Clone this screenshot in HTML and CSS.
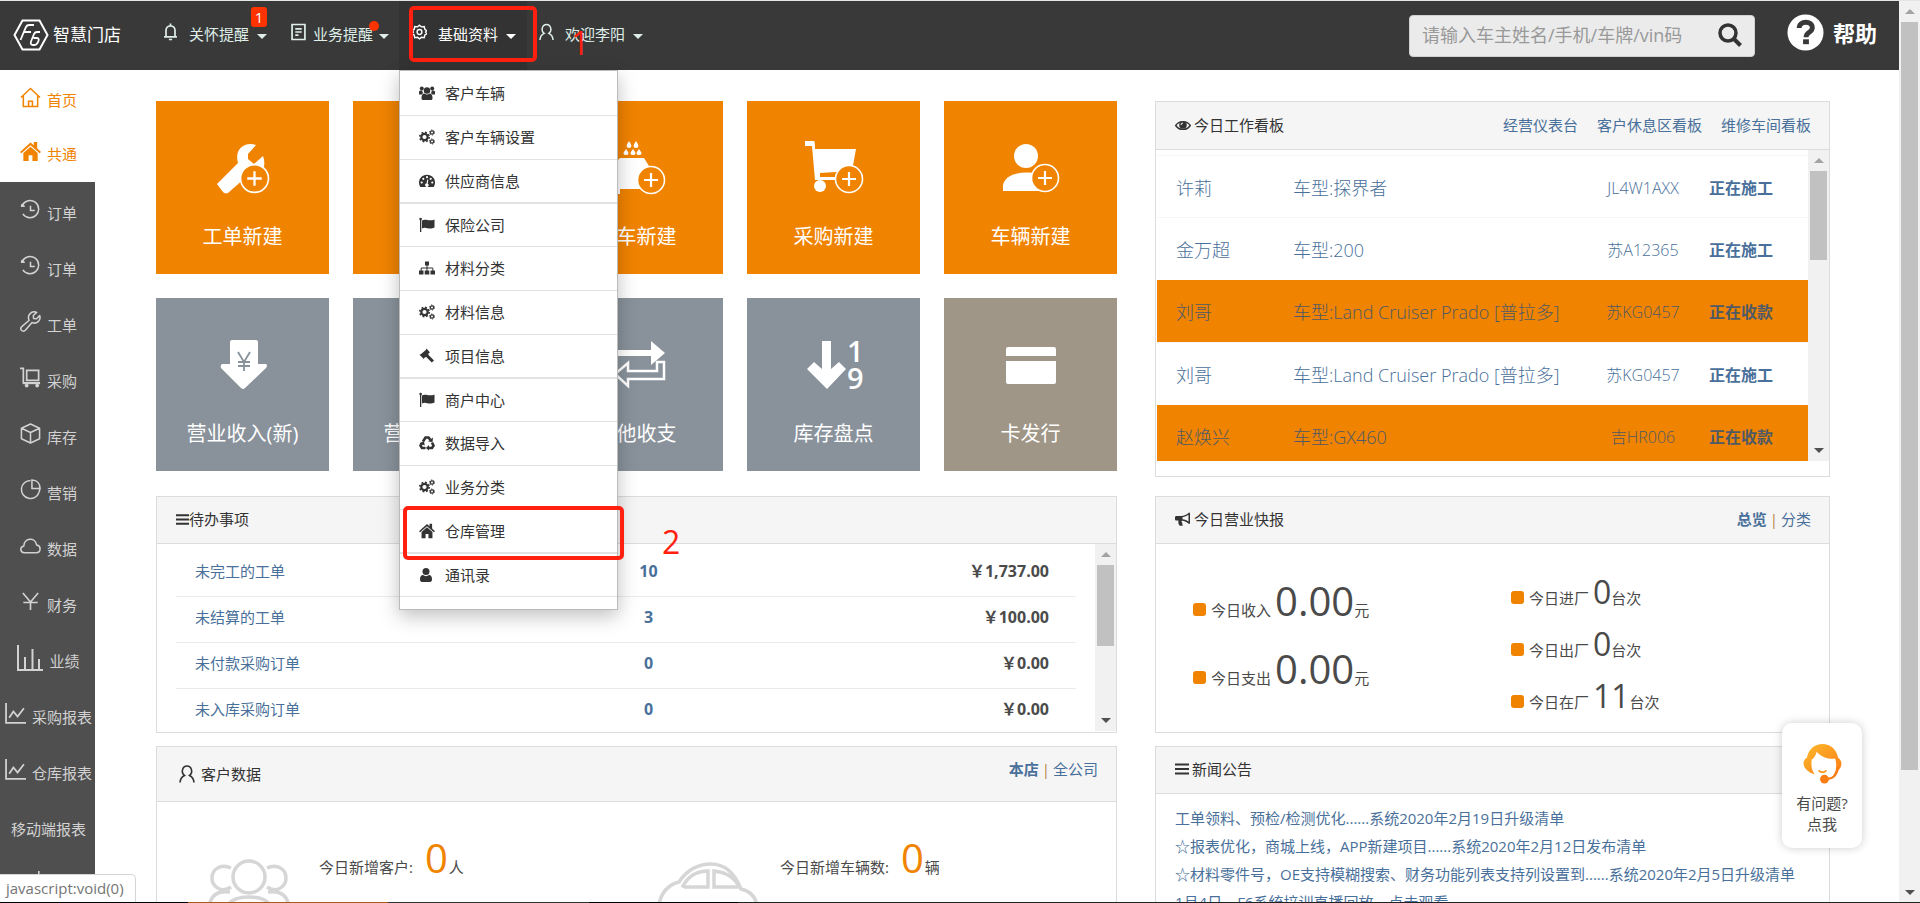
FILE: index.html
```
<!DOCTYPE html>
<html lang="zh-CN">
<head>
<meta charset="utf-8">
<title>智慧门店</title>
<link rel="stylesheet" href="styles.css">
</head>
<body>
<svg class="sprite" aria-hidden="true">
  <symbol id="history" viewBox="0 0 22 22"><path d="M2.5 6.500A9 9 0 1 1 3 15.500M1 7.500h4M11 7v5h4.500" fill="none" stroke="currentColor" stroke-width="1.600"/><circle cx="2.500" cy="6.500" r="1.500" fill="currentColor"/></symbol>
  <symbol id="wrench" viewBox="0 0 22 22"><path d="M20.600 4.800a5.800 5.800 0 0 1-8 7.200l-7 8.200a2.500 2.500 0 0 1-4-3.500l8-7A6 6 0 0 1 17.500 1.500l-3.600 3.200.3 3.200 3.200.2z" fill="none" stroke="currentColor" stroke-width="1.600" stroke-linejoin="round"/></symbol>
  <symbol id="trolley" viewBox="0 0 22 22"><path d="M0 1.500h3.500v15H21M7 3.500h12.500V14H7z" fill="none" stroke="currentColor" stroke-width="1.800"/><path d="M3 16.500h18v1.500H3z" fill="currentColor"/><circle cx="7" cy="19.500" r="2" fill="currentColor"/><circle cx="18" cy="19.500" r="2" fill="currentColor"/></symbol>
  <symbol id="box" viewBox="0 0 22 22"><path d="M11 1l9.500 4.500v11L11 21l-9.500-4.500v-11zM1.500 5.500L11 10l9.500-4.500M11 10v11" fill="none" stroke="currentColor" stroke-width="1.600" stroke-linejoin="round"/></symbol>
  <symbol id="pie" viewBox="0 0 22 22"><path d="M11 1.500A9.500 9.500 0 1 0 20 14M12.500 1v9H21C21 5 18 1 12.500 1z" fill="none" stroke="currentColor" stroke-width="1.600"/><path d="M20 14q1-3 .5-5" fill="none" stroke="currentColor" stroke-width="1.600"/></symbol>
  <symbol id="cloud" viewBox="0 0 22 22"><path d="M4.500 18.500C0 18.500-.5 12.500 4 11.500 4.500 2.500 16 2 17.500 10.500c5 1 4.500 8-.5 8z" fill="none" stroke="currentColor" stroke-width="1.600"/></symbol>
  <symbol id="yen" viewBox="0 0 22 22"><path d="M3 2l8 9.500L19 2M11 11.500V20M3.500 12h15" fill="none" stroke="currentColor" stroke-width="1.700"/></symbol>
  <symbol id="bars" viewBox="0 0 26 26"><path d="M1 0v25h25M8 12v12M15.500 4v20M22 14v10" fill="none" stroke="currentColor" stroke-width="2"/></symbol>
  <symbol id="trend" viewBox="0 0 20 20"><path d="M1 0v19h19M4 14l4-6 4 5 6-8" fill="none" stroke="currentColor" stroke-width="1.700"/></symbol>
  <symbol id="house-line" viewBox="0 0 22 22"><path d="M1 11L11 1.500 21 11M3.500 9.500v11h15v-11M9 20v-5h4v5" fill="none" stroke="currentColor" stroke-width="1.600"/></symbol>
  <symbol id="house" viewBox="0 0 22 22"><path d="M0 11.500L11 1.500l3.500 3V1H18v6.500l4 4-1.500 1.300L11 4.500 1.500 12.800zM3.500 12.500L11 6l7.500 6.500V21H13v-6H9v6H3.500z" fill="currentColor"/></symbol>
  <symbol id="bell" viewBox="0 0 14 16"><path d="M1 12.500h12M2.800 12.500V6.500a4.200 4.200 0 0 1 8.400 0v6M5.500 15h3M7 0v2" fill="none" stroke="currentColor" stroke-width="1.600"/></symbol>
  <symbol id="doc" viewBox="0 0 14 16"><path d="M1 1h12v14H1zM4 5h6M4 8h6M4 11h3" fill="none" stroke="currentColor" stroke-width="1.600"/></symbol>
  <symbol id="gear" viewBox="0 0 16 16"><path d="M8 .8l2 1.700 3-.3.700 2.900 2 1.400L14.500 8l1.200 2-2 1.200-.7 2.800-3-.3-2 1.700-2-1.700-3 .3-.7-2.800-2-1.200L1.500 8 .3 6.500l2-1.400.7-2.900 3 .3z" fill="none" stroke="currentColor" stroke-width="1.500"/><circle cx="8" cy="8" r="2.600" fill="none" stroke="currentColor" stroke-width="1.500"/></symbol>
  <symbol id="person" viewBox="0 0 16 18"><path d="M1 17.500c.3-4 2.500-6 4.500-7C1.500 7.500 3.500 1 8 1s6.500 6.500 2.500 9.500c2 1 4.200 3 4.500 7" fill="none" stroke="currentColor" stroke-width="1.600"/></symbol>
  <symbol id="users" viewBox="0 0 16 16"><circle cx="2.800" cy="3.500" r="2" fill="currentColor"/><circle cx="13.200" cy="3.500" r="2" fill="currentColor"/><path d="M0 9.500V7c0-1.500 1-1.500 3-1.500L4 8 3 9.500zM16 9.500V7c0-1.500-1-1.500-3-1.500L12 8l1 1.500z" fill="currentColor"/><circle cx="8" cy="5.500" r="3.200" fill="currentColor"/><path d="M2.500 13c0-3 1-4.500 3-4.500 1.500 1.300 3.500 1.300 5 0 2 0 3 1.500 3 4.500 0 1.500-.5 2-2 2h-7c-1.500 0-2-.5-2-2z" fill="currentColor"/></symbol>
  <symbol id="cogs" viewBox="0 0 16 16"><g fill="none" stroke="currentColor"><circle cx="5.500" cy="8" r="3.200" stroke-width="2.200"/><circle cx="5.500" cy="8" r="4.700" stroke-width="1.600" stroke-dasharray="1.850 1.840"/><circle cx="13" cy="3.500" r="1.600" stroke-width="1.200"/><circle cx="13" cy="3.500" r="2.500" stroke-width="1" stroke-dasharray="1.300 1.320"/><circle cx="13" cy="12.500" r="1.600" stroke-width="1.200"/><circle cx="13" cy="12.500" r="2.500" stroke-width="1" stroke-dasharray="1.300 1.320"/></g></symbol>
  <symbol id="gauge" viewBox="0 0 16 16"><path d="M1.300 14A8 8 0 1 1 14.700 14z" fill="currentColor"/><g fill="#fff"><circle cx="2.700" cy="9.500" r="1.100"/><circle cx="4.300" cy="5.800" r="1.100"/><circle cx="8" cy="4.200" r="1.100"/><circle cx="11.700" cy="5.800" r="1.100"/><circle cx="13.300" cy="9.500" r="1.100"/><path d="M8.300 6.500l1 .2-.6 4a1.700 1.700 0 1 1-1.200-.2z"/></g></symbol>
  <symbol id="flag" viewBox="0 0 16 16"><path d="M1 2h1.300v13H1zM3 3.500c4-2.500 6 1.500 12.500-1v8c-6 3-8.500-1.500-12.500 1z" fill="currentColor"/><circle cx="1.600" cy="2" r="1.300" fill="currentColor"/></symbol>
  <symbol id="sitemap" viewBox="0 0 16 16"><path d="M6 1.500h4v4H6zM0 10.500h4.500v4H0zM5.700 10.500h4.600v4H5.700zM11.500 10.500H16v4h-4.500z" fill="currentColor"/><path d="M2.200 11V8h11.600v3M8 5v6" fill="none" stroke="currentColor"/></symbol>
  <symbol id="gavel" viewBox="0 0 16 16"><path d="M7.500.5l3.500 4-1.200.6-.5 1.700 5.700 5.600-2.200 2.200-5.600-5.700-1.600.5-.7 1.700-4.400-4.400 1.600-.7L6.800 2z" fill="currentColor"/></symbol>
  <symbol id="recycle" viewBox="0 0 16 16"><g fill="none" stroke="currentColor" stroke-width="2.600"><path d="M4 6.500L6.500 2.500h3L11.500 5"/><path d="M13 7.500l1.500 3.200-1.500 2.300h-4"/><path d="M6.500 13H3l-1.500-2.300L3 8"/></g><path d="M9 6.500l4.500.5.500-4.500zM10 10v5.500L6.800 13zM.5 8.500L4.800 6l1 4.500z" fill="currentColor"/></symbol>
  <symbol id="user" viewBox="0 0 16 16"><circle cx="7" cy="4.500" r="3.500" fill="currentColor"/><path d="M1 12.500c0-3 1-4.500 3-4.500 1.800 1.500 4.200 1.500 6 0 2 0 3 1.500 3 4.500 0 1.500-.8 2.500-2 2.500H3c-1.200 0-2-1-2-2.500z" fill="currentColor"/></symbol>
  <symbol id="eye" viewBox="0 0 16 16"><path d="M.7 8.500C4 3.300 12 3.300 15.300 8.500 12 13.700 4 13.700.7 8.500z" fill="none" stroke="currentColor" stroke-width="1.400"/><circle cx="8" cy="8" r="3.800" fill="currentColor"/><path d="M6 8a2 2 0 0 1 2-2" fill="none" stroke="#fff"/></symbol>
  <symbol id="horn" viewBox="0 0 16 16"><path d="M0 6.500C0 5.500.5 5 1.500 5H6c3 0 6-1.500 8-3.500.5 0 1 .5 1 1V12c0 .5-.5 1-1 1-2-2-4.500-3-7-3.300-.8.500-.5 1.500.5 2.500-.7.8-.2 1.500.5 2-1 1-3 .8-4-.2-.5-1.500-1-3-.5-4.500h-2C.5 9.500 0 9 0 8z" fill="currentColor"/><path d="M7.500 6.200c2.300-.2 4.500-1.200 6-2.400v6.700c-1.500-1.100-3.700-2-6-2.200z" fill="#f5f5f5"/></symbol>
  <symbol id="lines" viewBox="0 0 14 14"><path d="M0 2.500h14M0 7h14M0 11.500h14" stroke="currentColor" stroke-width="2.200"/></symbol>
  <symbol id="plus" viewBox="0 0 30 30"><circle cx="15" cy="15" r="13.500" fill="#f08300" stroke="#fff" stroke-width="1.600"/><path d="M15 8v14M8 15h14" stroke="#fff" stroke-width="2.200"/></symbol>
</svg>

<div class="window">
  <div class="page">
    <header class="topbar">
      <a class="brand" href="#">
        <svg class="brand-mark" viewBox="0 0 36 32"><path d="M9.500 1.500h17L34.500 16l-8 14.500h-17L1.500 16z" fill="none" stroke="#fff" stroke-width="2"/><path d="M21 6h-5q-2 0-3 2L7.500 21M11 13h7M27 13h-3q-2 0-3 2l-3 7.500q-1 3.500 2 3.500h1.500q2 0 3-2l1-2q1-3-2-3h-3" fill="none" stroke="#fff" stroke-width="1.800"/></svg>
        <span>智慧门店</span>
      </a>
      <nav class="topnav">
        <button class="topnav-item" type="button"><svg class="nav-icon"><use href="#bell"/></svg><span>关怀提醒</span><i class="caret"></i><b class="badge">1</b></button>
        <button class="topnav-item tight" type="button"><svg class="nav-icon"><use href="#doc"/></svg><span>业务提醒</span><i class="caret"></i><b class="dot"></b></button>
        <div class="dropdown">
          <button class="topnav-item active" type="button"><svg class="nav-icon"><use href="#gear"/></svg><span>基础资料</span><i class="caret"></i></button>
          <div class="mark mark-one"></div>
          <ul class="menu">
            <li><a href="#"><svg><use href="#users"/></svg>客户车辆</a></li>
            <li><a href="#"><svg><use href="#cogs"/></svg>客户车辆设置</a></li>
            <li class="group-end"><a href="#"><svg><use href="#gauge"/></svg>供应商信息</a></li>
            <li><a href="#"><svg><use href="#flag"/></svg>保险公司</a></li>
            <li><a href="#"><svg><use href="#sitemap"/></svg>材料分类</a></li>
            <li><a href="#"><svg><use href="#cogs"/></svg>材料信息</a></li>
            <li class="group-end"><a href="#"><svg><use href="#gavel"/></svg>项目信息</a></li>
            <li><a href="#"><svg><use href="#flag"/></svg>商户中心</a></li>
            <li><a href="#"><svg><use href="#recycle"/></svg>数据导入</a></li>
            <li><a href="#"><svg><use href="#cogs"/></svg>业务分类</a></li>
            <li class="group-end"><a href="#"><svg><use href="#house"/></svg>仓库管理</a><div class="mark mark-two"></div><span class="step step-two">2</span></li>
            <li><a href="#"><svg><use href="#user"/></svg>通讯录</a></li>
          </ul>
        </div>
        <button class="topnav-item" type="button"><svg class="nav-icon"><use href="#person"/></svg><span>欢迎李阳</span><i class="caret"></i><em class="step step-one">1</em></button>
      </nav>
      <form class="search">
        <input type="text" aria-label="搜索" placeholder="请输入车主姓名/手机/车牌/vin码">
        <button type="button" aria-label="查询"><svg viewBox="0 0 24 24"><circle cx="10" cy="10" r="8" fill="none" stroke="#333" stroke-width="3.500"/><path d="M15.500 15.500l7 7" stroke="#333" stroke-width="4"/></svg></button>
      </form>
      <a class="help" href="#"><svg viewBox="0 0 38 38"><circle cx="19" cy="19" r="18.500" fill="#fff"/><path d="M12.500 14.500c0-8 13.500-8 13.500-.5 0 5-6.500 4.500-6.500 10" fill="none" stroke="#393939" stroke-width="5"/><path d="M16.500 26h6v5h-6z" fill="#393939"/></svg>帮助</a>
    </header>

    <div class="body">
      <nav class="sidebar">
        <div class="side-top">
          <a href="#"><svg><use href="#house-line"/></svg>首页</a>
          <a href="#"><svg><use href="#house"/></svg>共通</a>
        </div>
        <div class="side-list">
          <a href="#"><svg><use href="#history"/></svg>订单</a>
          <a href="#"><svg><use href="#history"/></svg>订单</a>
          <a href="#"><svg><use href="#wrench"/></svg>工单</a>
          <a href="#"><svg><use href="#trolley"/></svg>采购</a>
          <a href="#"><svg><use href="#box"/></svg>库存</a>
          <a href="#"><svg><use href="#pie"/></svg>营销</a>
          <a href="#"><svg><use href="#cloud"/></svg>数据</a>
          <a href="#"><svg><use href="#yen"/></svg>财务</a>
          <a href="#"><svg class="large"><use href="#bars"/></svg>业绩</a>
          <a href="#"><svg><use href="#trend"/></svg>采购报表</a>
          <a href="#"><svg><use href="#trend"/></svg>仓库报表</a>
          <a href="#">移动端报表</a>
          <a href="#" aria-label="更多"><svg><use href="#bars"/></svg></a>
        </div>
      </nav>

      <main class="board">
        <div class="column">
          <section class="tiles">
            <a class="tile" href="#"><svg viewBox="0 0 60 60"><path d="M4 46L25 25C21 12 31 3 43 7L35 16v5l6 5 9-8c3 8 1 16-6 20l-12 2-17 15c-2 1-4 0-5-1z" fill="#fff"/><use href="#plus" x="26" y="25" width="31" height="31"/></svg>工单新建</a>
            <a class="tile" href="#"><svg viewBox="0 0 60 60"><path d="M10 8h30v44H10z" fill="#fff"/><use href="#plus" x="29" y="27" width="30" height="30"/></svg>预约新建</a>
            <a class="tile" href="#"><svg viewBox="0 0 60 60"><path d="M22 3q5 7 0 7t0-7zM29 3q5 7 0 7t0-7zM19 11q5 6 0 6t0-6zM26 11q5 6 0 6t0-6zM32 11q5 6 0 6t0-6zM4 29l9-9h24l5 8 6 1v22H13v5H5V32z" fill="#fff"/><use href="#plus" x="29" y="27" width="30" height="30"/></svg>洗车新建</a>
            <a class="tile" href="#"><svg viewBox="0 0 60 60"><path d="M1 3h9q1 0 1 8h41l-4 22-32 2v4h30v3H11L8 8H1z" fill="#fff"/><circle cx="16" cy="48" r="6" fill="#fff"/><use href="#plus" x="30" y="26" width="30" height="30"/></svg>采购新建</a>
            <a class="tile" href="#"><svg viewBox="0 0 60 60"><circle cx="25" cy="18" r="12" fill="#fff"/><path d="M2 53V47C4 37 18 33 32 35L47 53z" fill="#fff"/><use href="#plus" x="29" y="25" width="30" height="30"/></svg>车辆新建</a>
            <a class="tile slate" href="#"><svg viewBox="0 0 60 60"><path d="M19 5h24q2 0 2 2v22h8q2 1 0 4L32 53q-2 2-4 0L8 33q-1-3 1-4h8V7q0-2 2-2z" fill="#fff"/><path d="M25 17l6 10 6-10M31 27v9M25 27h12M25 31h12" fill="none" stroke="#89929b" stroke-width="1.800"/></svg>营业收入(新)</a>
            <a class="tile slate" href="#"><svg viewBox="0 0 60 60"><path d="M17 53V30H8L30 5l22 25h-9v23z" fill="#fff"/></svg>营业支出(新)</a>
            <a class="tile slate" href="#"><svg viewBox="0 0 60 60"><path d="M2 15h42V6l14 12-14 12v-9H8v14H2z" fill="#fff"/><path d="M50 27h7v17H21v7L8 39l13-11v8h29z" fill="none" stroke="#fff" stroke-width="2.500"/></svg>其他收支</a>
            <a class="tile slate" href="#"><svg viewBox="0 0 60 60"><path d="M18 6h9v28l8-7 7 7-19 20L3 34l7-7 8 7z" fill="#fff"/><text class="sort-digit" x="43" y="27">1</text><text class="sort-digit" x="43" y="54">9</text></svg>库存盘点</a>
            <a class="tile sand" href="#"><svg viewBox="0 0 60 60"><path d="M7 12h46q2 0 2 2v7H5v-7q0-2 2-2zM5 26h50v21q0 2-2 2H7q-2 0-2-2z" fill="#fff"/></svg>卡发行</a>
          </section>

          <section class="panel todo">
            <h2 class="panel-head"><svg class="flush"><use href="#lines"/></svg>待办事项</h2>
            <div class="scroll-area">
              <div class="todo-list">
                <table class="todo-table">
                  <tr><td><a href="#">未完工的工单</a></td><td class="count">10</td><td class="money">￥1,737.00</td></tr>
                  <tr><td><a href="#">未结算的工单</a></td><td class="count">3</td><td class="money">￥100.00</td></tr>
                  <tr><td><a href="#">未付款采购订单</a></td><td class="count">0</td><td class="money">￥0.00</td></tr>
                  <tr><td><a href="#">未入库采购订单</a></td><td class="count">0</td><td class="money">￥0.00</td></tr>
                </table>
              </div>
              <div class="scrollbar"><i class="up"></i><i class="thumb thumb-todo"></i><i class="down"></i></div>
            </div>
          </section>

          <section class="panel customers">
            <div class="panel-head tall"><h2><svg class="person"><use href="#person"/></svg>客户数据</h2><div class="switch"><a class="on" href="#">本店</a><i>|</i><a href="#">全公司</a></div></div>
            <div class="customer-stats">
              <div class="customer-stat">
                <svg viewBox="0 0 80 70"><g fill="none" stroke="#d6d6d6" stroke-width="3.500"><circle cx="40" cy="18" r="16"/><path d="M22 9C11 4 3 11 3 19s9 16 19 9M58 9c11-5 19 2 19 10s-9 16-19 9M1 60V44q3-13 20-11M79 60V44q-3-13-20-11M18 60V50q2-12 22-12t22 12v10"/></g></svg>
                <span>今日新增客户:</span><strong>0</strong><span>人</span>
              </div>
              <div class="customer-stat car">
                <svg viewBox="0 0 102 70"><g fill="none" stroke="#d6d6d6" stroke-width="3.500"><path d="M2 60V42q4-18 20-22Q34 2 54 2t30 25q16 4 16 20v13M26 24Q34 9 51 9v16H28zM57 9q19 2 25 16H57z"/></g></svg>
                <span>今日新增车辆数:</span><strong>0</strong><span>辆</span>
              </div>
            </div>
          </section>
        </div>

        <div class="column">
          <section class="panel work">
            <div class="panel-head"><h2><svg><use href="#eye"/></svg>今日工作看板</h2><div class="head-links"><a href="#">经营仪表台</a><a href="#">客户休息区看板</a><a href="#">维修车间看板</a></div></div>
            <div class="scroll-area">
              <div class="work-list">
                <a href="#"><span>许莉</span><span>车型:探界者</span><span class="plate">JL4W1AXX</span><b>正在施工</b></a>
                <a href="#"><span>金万超</span><span>车型:200</span><span class="plate">苏A12365</span><b>正在施工</b></a>
                <a class="paying" href="#"><span>刘哥</span><span>车型:Land Cruiser Prado [普拉多]</span><span class="plate">苏KG0457</span><b>正在收款</b></a>
                <a href="#"><span>刘哥</span><span>车型:Land Cruiser Prado [普拉多]</span><span class="plate">苏KG0457</span><b>正在施工</b></a>
                <a class="paying" href="#"><span>赵焕兴</span><span>车型:GX460</span><span class="plate">吉HR006</span><b>正在收款</b></a>
              </div>
              <div class="scrollbar"><i class="up"></i><i class="thumb thumb-work"></i><i class="down"></i></div>
            </div>
          </section>

          <section class="panel report">
            <div class="panel-head"><h2><svg><use href="#horn"/></svg>今日营业快报</h2><div class="switch"><a class="on" href="#">总览</a><i>|</i><a href="#">分类</a></div></div>
            <div class="figures">
              <div class="figures-money">
                <p><i></i>今日收入 <strong>0.00</strong>元</p>
                <p><i></i>今日支出 <strong>0.00</strong>元</p>
              </div>
              <div class="figures-cars">
                <p><i></i>今日进厂 <strong>0</strong>台次</p>
                <p><i></i>今日出厂 <strong>0</strong>台次</p>
                <p><i></i>今日在厂 <strong>11</strong>台次</p>
              </div>
            </div>
          </section>

          <section class="panel news">
            <h2 class="panel-head"><svg class="list"><use href="#lines"/></svg>新闻公告</h2>
            <ul>
              <li><a href="#">工单领料、预检/检测优化......系统2020年2月19日升级清单</a></li>
              <li><a href="#">☆报表优化，商城上线，APP新建项目......系统2020年2月12日发布清单</a></li>
              <li><a href="#">☆材料零件号，OE支持模糊搜索、财务功能列表支持列设置到......系统2020年2月5日升级清单</a></li>
              <li><a href="#">1月4日，F6系统培训直播回放，点击观看</a></li>
            </ul>
          </section>
        </div>
      </main>
    </div>
  </div>
  <div class="scrollbar page-scroll"><i class="up"></i><i class="thumb thumb-page"></i><i class="down"></i></div>

  <a class="service" href="#">
    <svg viewBox="0 0 42 42"><defs><linearGradient id="amber" x1="0" y1="0" x2="1" y2="1"><stop offset="0" stop-color="#fdb92c"/><stop offset="1" stop-color="#fb7d14"/></linearGradient></defs><path d="M5 15C7 6 13 1 21 1s14 5 16 14c4 2 5 9 0 13-1 3-3 5-5 5 3-4 4-10 2-17-5 1-14-1-19-7-1 4-3 7-5 8-1 6 0 11 3 15C2 29-2 19 5 15z" fill="url(#amber)"/><path d="M37 24q-1 13-13 13" fill="none" stroke="#fb7d14" stroke-width="2"/><circle cx="23" cy="37" r="4.500" fill="#fb7d14"/><path d="M17 28q4 4 8 0" fill="none" stroke="#fb9a24" stroke-width="1.800"/></svg>
    <span>有问题?<br>点我</span>
  </a>
  <div class="status">javascript:void(0)</div>
  <div class="edge"></div>
</div>
</body>
</html>
```
FILE: styles.css
```
* { box-sizing: border-box; }
body {
  margin: 0;
  color: #4a4a4a;
  background: #fff;
  font: 15px/20px "Open Sans", "Noto Sans CJK SC", sans-serif;
}
a { color: #49709a; text-decoration: none; }
button, input { font: inherit; }
h2, p, ul { margin: 0; padding: 0; font-size: 15px; font-weight: 400; list-style: none; }
svg { flex: none; overflow: visible; }
.sprite { position: absolute; width: 0; height: 0; }

.window {
  position: relative;
  display: flex;
  height: 100vh;
  overflow: hidden;
  border-top: 1px solid #e3e6e4;
}
.page { flex: 1; min-width: 0; display: flex; flex-direction: column; }

/* top bar */
.topbar { display: flex; align-items: center; height: 69px; flex: none; background: #393939; }
.brand { display: flex; align-items: center; gap: 4px; width: 151px; padding: 0 0 2px 13px; color: #fff; font-size: 17px; }
.brand-mark { width: 36px; height: 32px; }
.topnav { display: flex; align-self: stretch; flex: 1; }
.topnav-item {
  position: relative;
  display: flex;
  align-items: center;
  gap: 11px;
  height: 69px;
  padding: 0 12px 3px;
  border: 0;
  color: #dfeee8;
  background: none;
  white-space: nowrap;
}
.topnav-item.tight { gap: 7px; padding-right: 10px; }
.topnav-item.active { padding: 0 11px 3px 13px; color: #fff; background: #333; }
.nav-icon { width: 15px; height: 18px; margin-bottom: 4px; }
.caret { width: 10px; margin: 4px 0 0 -3px; border: 5px solid transparent; border-top-color: currentColor; border-bottom: 0; }
.tight .caret { margin-left: -1px; }
.badge {
  position: absolute; top: 6px; right: 12px;
  width: 16px; height: 20px;
  border-radius: 3px;
  color: #fff; background: #ff3300;
  font-weight: 400;
}
.dot { position: absolute; top: 20px; right: 20px; width: 10px; height: 10px; border-radius: 50%; background: #ff3300; }
.search {
  display: flex;
  width: 346px; height: 42px;
  margin: 0 32px 0 0;
  padding: 0 12px 2px;
  align-items: center;
  border: 1px solid #d2d2d2;
  border-radius: 4px;
  background: #ebebeb;
}
.search input { flex: 1; min-width: 0; padding: 0; border: 0; outline: 0; background: none; font-size: 18px; }
.search input::placeholder { color: #999; }
.search button { display: flex; padding: 0; border: 0; background: none; }
.search svg { width: 24px; height: 24px; }
.help { display: flex; align-items: center; gap: 9px; margin-right: 22px; padding-bottom: 6px; color: #fff; font-size: 22px; font-weight: 700; }
.help svg { width: 37px; height: 37px; }

/* drop-down menu */
.dropdown { position: relative; z-index: 5; }
.menu {
  position: absolute; top: 69px; left: 0;
  width: 219px;
  padding: 1px 0 12px;
  border: 1px solid #bbb;
  background: #fff;
  box-shadow: 0 6px 18px rgba(0, 0, 0, .25);
}
.menu li { position: relative; height: 44px; border-bottom: 1px solid #e2e2e2; }
.menu li.group-end { border-bottom-width: 2px; }
.menu li.group-end + li { height: 43px; }
.menu a { display: flex; align-items: center; gap: 10px; height: 42px; padding-left: 19px; color: #333; }
.menu svg { width: 16px; height: 16px; }
.mark { position: absolute; border: 4px solid #ff2010; border-radius: 5px; }
.mark-one { top: 5px; left: 10px; width: 128px; height: 56px; pointer-events: none; }
.mark-two { top: -4px; left: 3px; width: 221px; height: 54px; pointer-events: none; }
.step { position: absolute; color: #ff2010; font: 32px/40px "Open Sans", sans-serif; }
.step-one { top: 22px; left: 44px; }
.step-two { top: 12px; left: 262px; }

/* sidebar */
.body { display: flex; flex: 1; min-height: 0; }
.sidebar { display: flex; flex-direction: column; width: 95px; flex: none; }
.sidebar a { display: flex; align-items: center; justify-content: center; gap: 6px; height: 56px; padding: 5px 0 0 2px; color: #d2d2d2; white-space: nowrap; }
.sidebar svg { width: 21px; height: 21px; margin-bottom: 6px; }
.sidebar svg.large { width: 26px; height: 26px; }
.side-top { height: 112px; }
.side-top a { color: #f08300; height: 54px; padding-top: 6px; }
.side-list { flex: 1; overflow: hidden; background: #4f4f4f; }

/* dashboard */
.board {
  flex: 1;
  min-width: 0;
  display: grid;
  grid-template-columns: 961fr 675fr;
  gap: 38px;
  padding: 31px 69px 0 61px;
}
.column { min-width: 0; display: flex; flex-direction: column; }
.tiles { display: grid; grid-template-columns: repeat(5, 1fr); gap: 24px; margin-bottom: 25px; }
.tile {
  display: flex; flex-direction: column; align-items: center; gap: 24px;
  aspect-ratio: 1;
  padding-top: 37px;
  color: #fff; background: #f08300;
  font-size: 20px; line-height: 30px;
}
.tile svg { width: 60px; height: 60px; }
.slate { background: #89929b; }
.sand { background: #9f9687; }
.sort-digit { fill: #fff; font: 600 29px "Open Sans", sans-serif; }

.panel { border: 1px solid #dcdcdc; background: #fff; }
.panel-head {
  display: flex; align-items: center; justify-content: space-between;
  height: 47px;
  padding: 0 18px 2px 19px;
  border-bottom: 1px solid #dcdcdc;
  color: #333; background: #f5f5f5;
}
.panel-head h2 { display: flex; align-items: center; gap: 3px; }
h2.panel-head { justify-content: flex-start; gap: 3px; }
.panel-head svg { width: 16px; height: 16px; }
.panel-head svg.flush { width: 13px; height: 13px; margin-right: -3px; }
.panel-head svg.list { width: 14px; height: 14px; }
.head-links { display: flex; gap: 19px; }
.switch i { margin: 0 3px; color: #b5813c; font-style: normal; }
.switch .on { font-weight: 700; }

.scroll-area { display: flex; overflow: hidden; }
.scrollbar {
  display: flex; flex-direction: column; align-items: center;
  width: 21px; flex: none;
  background: #f1f1f1;
}
.up, .down { height: 5px; margin: 8px 0; border: 5px solid transparent; }
.up { border-top: 0; border-bottom-color: #a3a3a3; }
.down { border-bottom: 0; border-top-color: #505050; margin-top: auto; }
.thumb { width: 17px; background: #c1c1c1; }

/* to-do list */
.todo { height: 237px; margin-bottom: 13px; }
.todo .scroll-area { height: 187px; }
.todo-list { flex: 1; padding: 6px 19px 0; overflow: hidden; }
.todo-table { width: 100%; table-layout: fixed; border-collapse: collapse; }
.todo-table tr { height: 46px; border-bottom: 1px solid #ebebeb; }
.todo-table tr:last-child { border-bottom: 0; }
.todo-table td { width: 38%; padding: 0 0 4px 19px; }
.todo-table .count { width: 29%; padding-left: 0; color: #49709a; text-align: center; font-size: 16px; font-weight: 700; }
.todo-table .money { width: 33%; padding-right: 27px; text-align: right; font-weight: 700; font-size: 16px; }
.thumb-todo { height: 81px; }

/* customer data */
.customers { flex: 1; min-height: 0; overflow: hidden; }
.panel-head.tall { height: 55px; }
.panel-head.tall h2 { gap: 6px; padding-top: 2px; padding-left: 3px; }
.panel-head.tall .switch { padding-bottom: 8px; }
.panel-head svg.person { height: 18px; }
.customer-stats { display: grid; grid-template-columns: 448px 1fr; padding: 57px 0 0 52px; }
.customer-stat { display: flex; height: 70px; align-items: flex-start; line-height: 16px; }
.customer-stat svg { width: 80px; height: 70px; margin-right: 30px; }
.customer-stat.car svg { width: 102px; margin: 3px 21px 0 0; }
.customer-stat strong { margin: -11px 1px 0 12px; color: #f08300; font-size: 40px; line-height: 20px; font-weight: 400; }

/* workshop list */
.work { height: 376px; margin-bottom: 19px; }
.work .panel-head { height: 48px; }
.work .scroll-area { height: 311px; }
.work-list { flex: 1; padding: 5px 0 0 1px; overflow: hidden; font-size: 18px; font-weight: 300; }
.work-list a {
  display: grid;
  grid-template-columns: 117px 1fr 100px 96px;
  align-items: center;
  height: 62px;
  padding: 2px 19px 0;
  border-top: 1px solid #f5f5f5;
}
.work-list .paying { margin-top: 1px; color: #4f5a66; background: #f08300; border-top: 0; }
.plate { font-size: 16px; text-align: center; }
.work-list b { padding-left: 16px; font-size: 16px; font-weight: 700; white-space: nowrap; }
.thumb-work { height: 89px; }

/* daily report */
.report { height: 237px; margin-bottom: 13px; }
.figures { display: grid; grid-template-columns: 318px 1fr; padding: 23px 0 0 37px; }
.figures p { display: flex; align-items: baseline; }
.figures p i { align-self: baseline; width: 13px; height: 13px; margin-right: 5px; border-radius: 3px; background: #f08300; }
.figures strong { margin-left: 4px; font-weight: 400; }
.figures-money { padding-top: 9px; }
.figures-money p { height: 68px; line-height: 50px; }
.figures-money strong { font-size: 40px; }
.figures-cars p { height: 52px; line-height: 50px; }
.figures-cars strong { font-size: 32px; }

/* news */
.news { flex: 1; min-height: 0; overflow: hidden; }
.news ul { padding: 10px 19px; }
.news li { height: 28px; line-height: 28px; white-space: nowrap; }

/* window furniture */
.thumb-page { height: 748px; }
.service {
  position: absolute; top: 722px; right: 58px;
  display: flex; flex-direction: column; align-items: center; gap: 9px;
  width: 80px; height: 125px;
  padding-top: 20px;
  border-radius: 10px;
  color: #4a4a4a; background: #fff;
  box-shadow: 0 0 10px rgba(0, 0, 0, .2);
  text-align: center; line-height: 21px;
}
.service svg { width: 41px; height: 41px; }
.status {
  position: absolute; left: 0; bottom: 1px;
  height: 28px;
  padding: 0 11px 0 6px;
  border: 1px solid #d5d5d5; border-width: 1px 1px 0 0;
  border-radius: 0 5px 0 0;
  color: #757575; background: #fff;
  line-height: 27px;
}
.edge {
  position: absolute; left: 0; right: 0; bottom: 0;
  height: 1px;
  background: linear-gradient(90deg, #000 188px, #a85a18 188px, #a85a18 388px, #333 388px, #333 589px, #000 589px, #000 738px, #222 738px);
}
```
